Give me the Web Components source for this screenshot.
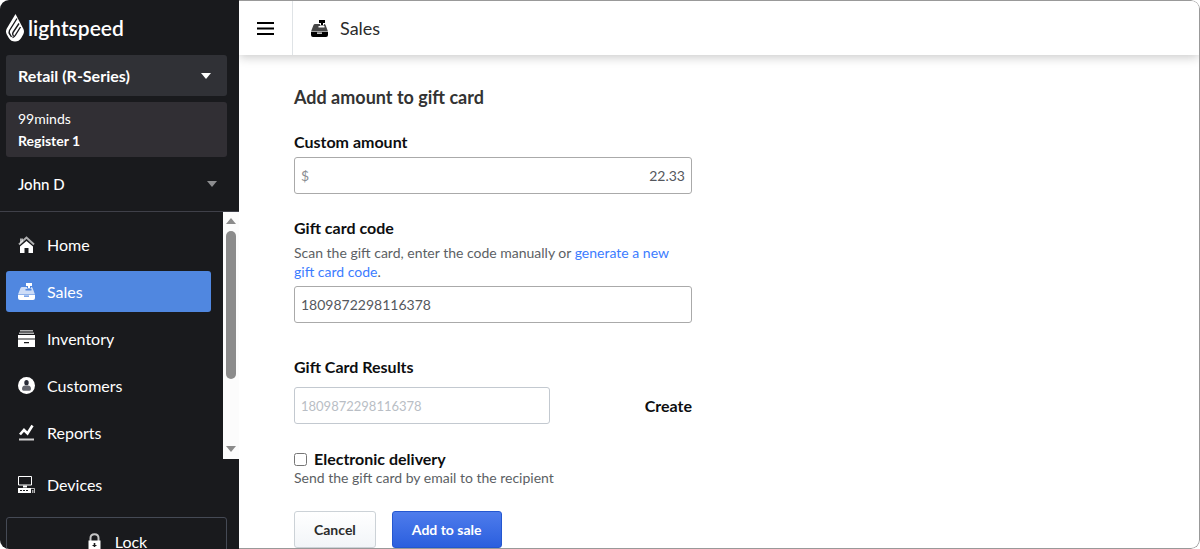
<!DOCTYPE html>
<html lang="en">
<head>
<meta charset="utf-8">
<title>Sales</title>
<style>
  body { margin: 0; background: #fff; font-family: Lato, "Open Sans", sans-serif; font-size: 16px; color: #0d0e10; }
</style>
</head>
<body>
<pos-app></pos-app>
<script>
const define = (name, html) => customElements.define(name, class extends HTMLElement {
  constructor() {
    super();
    const t = document.createElement('template');
    t.innerHTML = html;
    this.attachShadow({ mode: 'open', delegatesFocus: true }).append(t.content.cloneNode(true));
  }
});

const icons = {
  home: '<path d="M1 8.600 8.500 1.600 16 8.600" fill="none" stroke="currentColor" stroke-width="2" opacity=".65"/><path d="M2 2.500h3v3L2 8z" opacity=".65"/><path d="M8.500 5 15 10.500V17h-4.500v-5h-4v5H2v-6.500z"/>',
  sales: '<path d="M8 0h6v3h-2v2h-2V3H8z"/><path fill-rule="evenodd" d="M4 4h5v1.500h4V4q1.300 0 1.600 1L17 11.500H0L2.500 5Q3 4 4 4zM7.500 6v1.400h6V6z" opacity=".72"/><path fill-rule="evenodd" d="M0 12h17v3q0 2-2 2H2q-2 0-2-2zM6 12.500v1.200h5v-1.200z"/>',
  inventory: '<path d="M2 0h13v1.500H2zM1 2.500h15V4H1z" opacity=".65"/><path d="M0 5h17v3.500H0z"/><path fill-rule="evenodd" d="M0 9.500h17V17H0zM6 12v1.200h5V12z"/>',
  customers: '<circle cx="8.500" cy="8.500" r="8.500"/><g fill="#292c37"><ellipse cx="8.500" cy="5.800" rx="2.200" ry="2.800"/><path opacity=".72" d="M4 12q0-3.500 3-3.500 1.500 1.200 3 0 3 0 3 3.500 0 1.800-1.500 1.800h-6Q4 13.800 4 12z"/></g>',
  reports: '<path d="M2 10.500 6 6l3.500 3.500 5-8" fill="none" stroke="currentColor" stroke-width="2.600"/><path d="M1 14.500h15v2H1z" opacity=".8"/>',
  devices: '<path fill="none" stroke="currentColor" d="M.5.500h13v8.500H.5z"/><path d="M5 9.500h4v2H5zM0 12h13v5H0z"/><path d="M13 12.500h3.500V17" fill="none" stroke="currentColor" opacity=".7"/><path d="M14 14h1.500v3H14z" opacity=".6"/><path d="M2 14.500h9" stroke="#191a1d" stroke-dasharray="2 1"/>',
  lock: '<path d="M4.500 8V5q0-3.800 4-3.800t4 3.800v3" fill="none" stroke="currentColor" stroke-width="2" opacity=".75"/><path d="M2.500 7.500h12V17h-12z"/><path d="M7.700 10h1.600v4H7.700zM6.500 12h4v1h-4z" fill="#191a1d"/>',
  menu: '<path d="M0 2h17v2H0zM0 7.500h17v2H0zM0 13h17v2H0z"/>'
};
customElements.define('pos-icon', class extends HTMLElement {
  constructor() {
    super();
    this.attachShadow({ mode: 'open' });
  }
  connectedCallback() {
    this.shadowRoot.innerHTML = `<style>:host{display:block;flex:none;width:17px;height:17px}svg{display:block}</style>
      <svg width="17" height="17" viewBox="0 0 17 17" fill="currentColor" aria-hidden="true">${icons[this.getAttribute('name')]}</svg>`;
  }
});

define('pos-caret', `<style>:host{display:block;border:5px solid transparent;border-top:6px solid;border-bottom:0}</style>`);

define('pos-logo', `
<style>
  :host { display: flex; align-items: center; gap: 4px; height: 28px; color: #fff; }
  span { font: 600 21px/28px Lato, sans-serif; }
  svg { display: block; }
</style>
<svg width="18" height="28" viewBox="0 0 18 28" aria-hidden="true">
  <path fill="#fff" d="M9.500 0 .8 14.500Q-.8 17.500.8 20.500l2 3.500Q5 27.500 9 27.500t6.200-3.500l2-3.500q1.600-3 0-6z"/>
  <g fill="none" stroke="#191a1d" stroke-width="1.400">
    <path d="M11 4.500 3.500 16.500Q2.500 18.500 4 20.500l1.500 2.500"/>
    <path d="M13 9.500 7 18.500q-1 1.500.5 3.500"/>
    <path d="M14.500 13 9.500 21q-1 2-3 2.500"/>
  </g>
</svg><span>lightspeed</span>`);

define('pos-nav-item', `
<style>
  :host { display: block; }
  a { display: flex; align-items: center; gap: 12px; height: 41px; padding: 0 12px; border-radius: 3px; color: #fff; text-decoration: none; line-height: 24px; }
  :host([active]) a { background: #5087e0; }
</style>
<a href="#"><slot name="icon"></slot><slot></slot></a>`);

define('pos-scrollbar', `
<style>
  :host { display: flex; flex-direction: column; align-items: center; justify-content: space-between; box-sizing: border-box; width: 16px; padding: 6px 0 7px; background: #fcfcfc; color: #8b8b8b; }
  .thumb { width: 10px; height: 148px; margin: 7px 0 auto; border-radius: 5px; background: #8b8b8b; }
  .up { transform: rotate(180deg); }
</style>
<pos-caret class="up"></pos-caret><div class="thumb"></div><pos-caret></pos-caret>`);

define('pos-sidebar', `
<style>
  :host { display: flex; flex-direction: column; flex: none; box-sizing: border-box; width: 239px; padding-top: 14px; background: #191a1d; color: #fff; overflow: hidden; }
  button { font: inherit; color: inherit; background: none; border: 0; cursor: pointer; }
  .top { display: flex; flex-direction: column; gap: 6px; padding: 0 12px 0 6px; flex: none; }
  .product { display: flex; align-items: center; justify-content: space-between; height: 41px; margin-top: 7px; padding: 0 16px 0 12px; border-radius: 3px; background: #303136; font-size: 16px; font-weight: 700; }
  .register { height: 55px; box-sizing: border-box; padding: 6px 12px; border-radius: 3px; background: #312f34; font-size: 14px; line-height: 22px; }
  .register strong { display: block; }
  .user { display: flex; align-items: center; justify-content: space-between; height: 42px; padding: 0 10px 0 12px; font-size: 15px; font-weight: 500; }
  .user pos-caret { color: #8d8e90; }
  .scroll { display: flex; flex: none; margin-top: 6px; border-top: 1px solid #3f4049; }
  nav { flex: 1; display: flex; flex-direction: column; gap: 6px; padding: 12px 12px 6px 6px; }
  .bottom { padding: 5px 12px 0 6px; flex: none; }
  .lock { display: flex; align-items: center; justify-content: center; gap: 12px; width: 100%; height: 48px; margin-top: 12px; border: 1px solid #454a55; border-radius: 3px; }
</style>
<div class="top">
  <pos-logo></pos-logo>
  <button class="product">Retail (R-Series)<pos-caret></pos-caret></button>
  <div class="register">99minds<strong>Register 1</strong></div>
  <button class="user">John D<pos-caret></pos-caret></button>
</div>
<div class="scroll">
  <nav>
    <pos-nav-item><pos-icon slot="icon" name="home"></pos-icon>Home</pos-nav-item>
    <pos-nav-item active><pos-icon slot="icon" name="sales"></pos-icon>Sales</pos-nav-item>
    <pos-nav-item><pos-icon slot="icon" name="inventory"></pos-icon>Inventory</pos-nav-item>
    <pos-nav-item><pos-icon slot="icon" name="customers"></pos-icon>Customers</pos-nav-item>
    <pos-nav-item><pos-icon slot="icon" name="reports"></pos-icon>Reports</pos-nav-item>
  </nav>
  <pos-scrollbar></pos-scrollbar>
</div>
<div class="bottom">
  <pos-nav-item><pos-icon slot="icon" name="devices"></pos-icon>Devices</pos-nav-item>
  <button class="lock"><pos-icon name="lock"></pos-icon>Lock</button>
</div>`);

define('pos-header', `
<style>
  :host { display: flex; height: 54px; background: #fff; box-shadow: 0 2px 10px rgba(0,0,0,.22); color: #000; }
  button { display: flex; align-items: center; justify-content: center; width: 54px; padding: 0; border: 0; border-right: 1px solid #dfe3e6; background: none; color: #000; }
  .title { display: flex; align-items: center; gap: 12px; padding-left: 18px; font-size: 18px; line-height: 22px; }
  .title span { color: #2b2b2b; }
</style>
<button aria-label="Menu"><pos-icon name="menu"></pos-icon></button>
<div class="title"><pos-icon name="sales"></pos-icon><span><slot></slot></span></div>`);

define('pos-button', `
<style>
  :host { display: block; }
  button { height: 37px; padding: 0 19px; border: 1px solid #ccd2d7; border-radius: 3px; background: linear-gradient(#fff, #f2f5f8); color: #2b2b2b; font: 700 14px/20px Lato, sans-serif; }
  :host([primary]) button { border-color: #2457d0; background: linear-gradient(#4e7cec, #2b5fde); color: #fff; }
</style>
<button type="button"><slot></slot></button>`);

define('pos-gift-form', `
<style>
  :host { display: block; padding: 30px 54px 0 55px; }
  form { max-width: 398px; }
  h1 { margin: 0 0 23px; font-size: 18px; line-height: 24px; font-weight: 700; color: #333; }
  label { font-weight: 700; line-height: 20px; }
  .block { display: block; }
  p { margin: 0; font-size: 14px; line-height: 18px; color: #5c5f64; }
  .hint { margin-top: 5px; line-height: 19px; }
  a { color: #3b7cff; text-decoration: none; }
  .box { display: flex; align-items: center; box-sizing: border-box; height: 37px; border: 1px solid #aaa; border-radius: 3px; padding: 0 6px; color: #8a8d92; font-size: 14px; }
  .box input { flex: 1; min-width: 0; padding: 0; border: 0; outline: 0; background: none; font: inherit; color: #55585d; }
  .amount { margin: 5px 0 24px; }
  .amount input { text-align: right; }
  .code { margin: 5px 0 34px; }
  .row { display: flex; justify-content: space-between; align-items: center; margin: 10px 0 25px; }
  .row .box { width: 256px; border-color: #c3c9d0; }
  .row input { font-size: 13px; color: #b9bec5; }
  .row button { padding: 0; border: 0; background: none; color: #0d0e10; font: 700 16px/20px Lato, sans-serif; }
  .check { display: flex; align-items: center; gap: 7px; }
  .check input { width: 13px; height: 13px; margin: 0; }
  .actions { display: flex; gap: 16px; margin-top: 24px; }
</style>
<form>
  <h1>Add amount to gift card</h1>
  <label class="block" for="amount">Custom amount</label>
  <div class="box amount">$<input id="amount" value="22.33"></div>
  <label class="block" for="code">Gift card code</label>
  <p class="hint">Scan the gift card, enter the code manually or <a href="#">generate a new gift card code</a>.</p>
  <div class="box code"><input id="code" value="1809872298116378"></div>
  <label class="block" for="result">Gift Card Results</label>
  <div class="row"><div class="box"><input id="result" value="1809872298116378" readonly></div><button type="button">Create</button></div>
  <div class="check"><input type="checkbox" id="email"><label for="email">Electronic delivery</label></div>
  <p>Send the gift card by email to the recipient</p>
  <div class="actions"><pos-button>Cancel</pos-button><pos-button primary>Add to sale</pos-button></div>
</form>`);

define('pos-app', `
<style>
  :host { display: flex; box-sizing: border-box; height: 100vh; overflow: hidden; border-radius: 9px; background: #fff; }
  main { flex: 1; min-width: 0; border: 1px solid #999; border-left: 0; border-radius: 0 9px 9px 0; overflow: hidden; }
</style>
<pos-sidebar></pos-sidebar>
<main><pos-header>Sales</pos-header><pos-gift-form></pos-gift-form></main>`);
</script>
</body>
</html>
